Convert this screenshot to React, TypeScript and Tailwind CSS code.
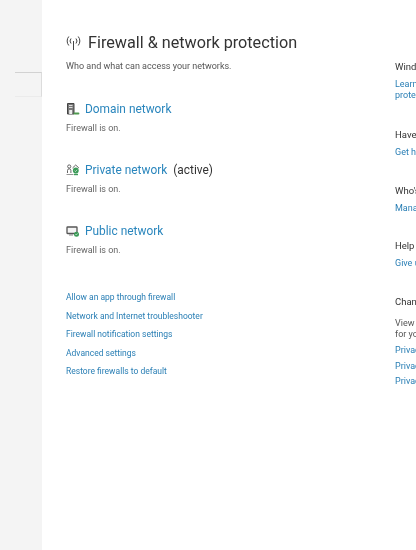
import React from "react";

// --- Data ---
type Network = {
  name: string;
  active?: boolean;
  icon: React.ReactNode;
};

const NETWORKS: Network[] = [
  {
    name: "Domain network",
    icon: (
      <svg width="14" height="14" viewBox="0 0 14 14" className="shrink-0">
        <path d="M1.5 1.5h6.5v10.5h-6.5z" fill="#777" stroke="#444" strokeWidth="1" />
        <path d="M3 3.5h3.5M3 5.5h3.5" stroke="#ddd" strokeWidth="1" />
        <path d="M3.2 8h3v4h-3z" fill="#eee" />
        <path d="M8.5 11.5h4" stroke="#4f9a4f" strokeWidth="1.8" strokeLinecap="round" />
      </svg>
    ),
  },
  {
    name: "Private network",
    active: true,
    icon: (
      <svg width="14" height="14" viewBox="0 0 14 14" className="shrink-0">
        <circle cx="3.2" cy="3.5" r="1.6" fill="none" stroke="#555" strokeWidth="0.9" />
        <path d="M1.5 10V7.5a1.7 1.7 0 0 1 3.4 0V10" fill="none" stroke="#555" strokeWidth="0.9" />
        <path d="M6.5 5l3.2-3 3.2 3" fill="none" stroke="#555" strokeWidth="0.9" />
        <circle cx="9.8" cy="7.5" r="2.9" fill="#3b9a57" />
        <path d="M8.5 7.6l1 1 1.6-1.8" fill="none" stroke="#dff2e4" strokeWidth="0.7" />
        <path d="M0.5 11.5h7" stroke="#8a8a8a" strokeWidth="0.9" />
        <path d="M8 11.5h4" stroke="#3b9a57" strokeWidth="1.4" />
      </svg>
    ),
  },
  {
    name: "Public network",
    icon: (
      <svg width="14" height="14" viewBox="0 0 14 14" className="shrink-0">
        <rect x="1" y="3" width="10" height="6.5" rx="0.6" fill="#f4f4f4" stroke="#555" strokeWidth="1.3" />
        <path d="M3 11h4" stroke="#777" strokeWidth="0.9" />
        <circle cx="10.5" cy="10.2" r="2.5" fill="#3b9a57" />
        <path d="M9.4 10.2l.8.8 1.4-1.5" fill="none" stroke="#dff2e4" strokeWidth="0.7" />
      </svg>
    ),
  },
];

const LINKS = [
  "Allow an app through firewall",
  "Network and Internet troubleshooter",
  "Firewall notification settings",
  "Advanced settings",
  "Restore firewalls to default",
];

const SideSection = ({
  title,
  lines,
  className,
}: {
  title: string;
  lines: string[];
  className: string;
}) => (
  <div className={className}>
    <p className="text-[9.5px] leading-[14px] whitespace-nowrap text-[#333]">{title}</p>
    <div className="mt-[5px] text-[9px] leading-[11px] whitespace-nowrap text-[#2a7fb5]">
      {lines.map((line) => (
        <p key={line}>{line}</p>
      ))}
    </div>
  </div>
);

export default function App() {
  return (
    <div className="flex h-[550px] w-[416px] overflow-hidden bg-white font-['Roboto',sans-serif] blur-[0.35px]">
      {/* Sidebar */}
      <div className="w-[42px] shrink-0 bg-[#f4f4f4] pt-[72px]">
        <div className="ml-auto h-[25px] w-[27px] border-t border-r border-b border-t-[#d2d2d2] border-r-[#dcdcdc] border-b-[#ebebeb]" />
      </div>

      {/* Main column */}
      <div className="w-[353px] shrink-0 pt-[32px] pl-[24px]">
        <div className="flex items-center gap-[7px]">
          <svg width="15" height="16" viewBox="0 0 15 16" className="shrink-0" fill="none" stroke="#444" strokeWidth="1">
            <path d="M7.5 6v9" />
            <path d="M5 3.5a4 4 0 0 0 0 5M10 3.5a4 4 0 0 1 0 5" />
            <path d="M2.8 1.5a7 7 0 0 0 0 9M12.2 1.5a7 7 0 0 1 0 9" />
          </svg>
          <h1 className="text-[16.2px] leading-[22px] whitespace-nowrap text-[#333]">
            Firewall &amp; network protection
          </h1>
        </div>
        <p className="mt-[6px] text-[9px] leading-[12px] text-[#555]">
          Who and what can access your networks.
        </p>

        <div className="mt-[29px] flex flex-col gap-[28px]">
          {NETWORKS.map((n) => (
            <div key={n.name}>
              <div className="flex items-center gap-[5px] text-[11.9px] leading-[16px] whitespace-nowrap">
                {n.icon}
                <span className="text-[#2a86bd]">{n.name}</span>
                {n.active && <span className="ml-[1px] text-[#333]">(active)</span>}
              </div>
              <p className="mt-[5px] text-[9px] leading-[12px] text-[#666]">Firewall is on.</p>
            </div>
          ))}
        </div>

        <div className="mt-[35px] flex flex-col gap-[6.5px] text-[8.5px] leading-[12px] whitespace-nowrap text-[#2a7fb5]">
          {LINKS.map((l) => (
            <p key={l}>{l}</p>
          ))}
        </div>
      </div>

      {/* Right column, cut off by the window */}
      <div className="min-w-0 flex-1 overflow-hidden pt-[60px]">
        <SideSection title="Windows Community" lines={["Learn more about", "protection"]} className="" />
        <SideSection title="Have a question?" lines={["Get help"]} className="mt-[27px]" />
        <SideSection title="Who's protecting me?" lines={["Manage providers"]} className="mt-[26px]" />
        <SideSection title="Help improve" lines={["Give us feedback"]} className="mt-[25px]" />
        <div className="mt-[26px]">
          <p className="text-[9.5px] leading-[14px] whitespace-nowrap text-[#333]">Change your privacy</p>
          <p className="mt-[9px] text-[9px] leading-[11px] whitespace-nowrap text-[#555]">View and change</p>
          <p className="text-[9px] leading-[11px] whitespace-nowrap text-[#555]">for your device</p>
          <div className="mt-[5px] flex flex-col gap-[4.5px] text-[9px] leading-[11px] whitespace-nowrap text-[#2a7fb5]">
            <p>Privacy settings</p>
            <p>Privacy dashboard</p>
            <p>Privacy statement</p>
          </div>
        </div>
      </div>
    </div>
  );
}
